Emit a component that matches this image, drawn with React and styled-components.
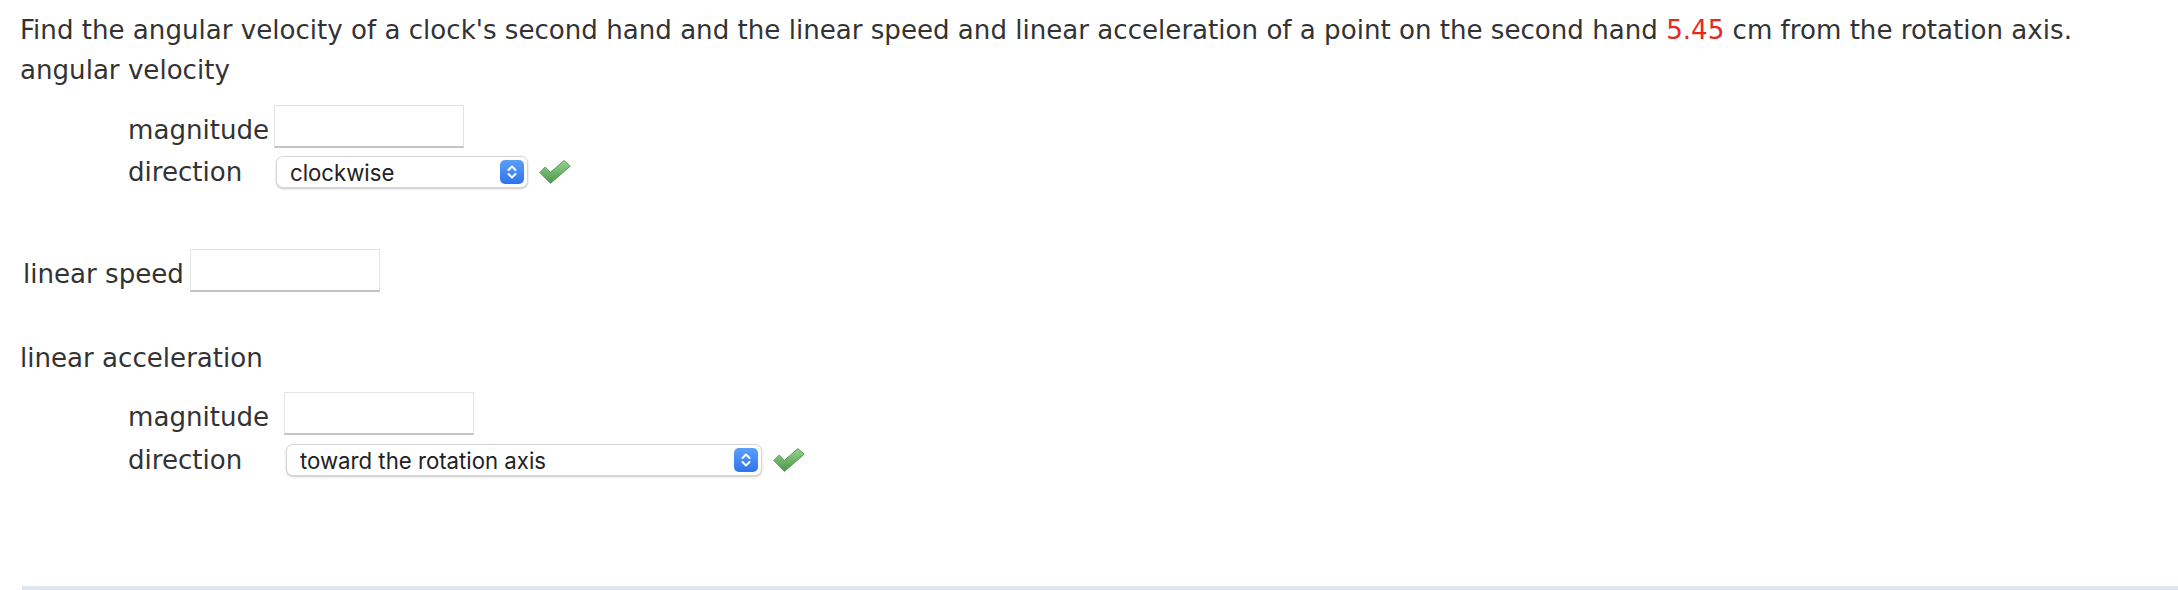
import styled, { createGlobalStyle } from "styled-components";

const GlobalStyle = createGlobalStyle`
  html, body {
    margin: 0;
    padding: 0;
    background: #fff;
  }
  body {
    font-family: "DejaVu Sans", Verdana, sans-serif;
    font-size: 26.1px;
    color: #333;
  }
`;

function Stepper() {
    return (
        <StepperSvg viewBox="0 0 24 24">
            <defs>
                <linearGradient id="stepGrad" x1="0" y1="0" x2="0" y2="1">
                    <stop offset="0" stopColor="#5b9ff9" />
                    <stop offset="1" stopColor="#2f73ee" />
                </linearGradient>
            </defs>
            <rect x="0" y="0" width="24" height="24" rx="5" fill="url(#stepGrad)" />
            <path d="M8.5 10 L12 6.5 L15.5 10" fill="none" stroke="#fff" strokeWidth="2" strokeLinecap="round" strokeLinejoin="round" />
            <path d="M8.5 14 L12 17.5 L15.5 14" fill="none" stroke="#fff" strokeWidth="2" strokeLinecap="round" strokeLinejoin="round" />
        </StepperSvg>
    )
}

function Check() {
    return (
        <CheckSvg viewBox="0 0 32 24">
            <defs>
                <linearGradient id="checkGrad" x1="0" y1="0" x2="0" y2="1">
                    <stop offset="0" stopColor="#96d490" />
                    <stop offset="1" stopColor="#4c964a" />
                </linearGradient>
            </defs>
            <polygon points="0.8,12.5 6.2,7 11.5,12.3 25,0.6 31.2,6.2 11.5,23.4" fill="url(#checkGrad)" stroke="#5a9955" strokeWidth="1" strokeLinejoin="round" />
        </CheckSvg>
    )
}

function Dropdown({value, width}) {
    return (
        <SelectBox $width={width}>
            <SelectText>{value}</SelectText>
            <Stepper />
        </SelectBox>
    )
}

function FieldGroup({top, labelWidth, gap, direction, selectWidth}) {
    return (
        <Group $top={top} $gap={gap}>
            <Row>
                <Label $width={labelWidth} $drop>magnitude</Label>
                <TextInput />
            </Row>
            <Row>
                <Label $width={labelWidth}>direction</Label>
                <Dropdown value={direction} width={selectWidth} />
                <Check />
            </Row>
        </Group>
    )
}

export default function App() {
    return (
        <>
            <GlobalStyle />
            <Page>
                <Prompt>
                    Find the angular velocity of a clock's second hand and the linear speed and linear acceleration of a point on the second hand <Red>5.45</Red> cm from the rotation axis.
                </Prompt>
                <Heading>angular velocity</Heading>
                <FieldGroup top={15} gap={8} labelWidth={146} direction="clockwise" selectWidth={252} />
                <SpeedRow>
                    <Label $drop>linear speed</Label>
                    <TextInput />
                </SpeedRow>
                <Heading $top={46}>linear acceleration</Heading>
                <FieldGroup top={14} gap={9} labelWidth={156} direction="toward the rotation axis" selectWidth={476} />
                <Divider />
            </Page>
        </>
    )
}

const Page = styled.div`
  padding: 10px 0 0 20px;
  height: 590px;
  box-sizing: border-box;
  overflow: hidden;
`;

const Prompt = styled.div`
  line-height: 40px;
  white-space: nowrap;
`;

const Red = styled.span`
  color: #e8281d;
`;

const Heading = styled.div`
  line-height: 40px;
  margin-top: ${p => p.$top || 0}px;
`;

const Group = styled.div`
  display: flex;
  flex-direction: column;
  gap: ${p => p.$gap}px;
  margin-top: ${p => p.$top}px;
  padding-left: 108px;
`;

const Row = styled.div`
  display: flex;
  align-items: center;
`;

const Label = styled.span`
  line-height: 30px;
  padding-top: ${p => p.$drop ? 6 : 0}px;
  ${p => p.$width ? `width: ${p.$width}px;` : ""}
  flex-shrink: 0;
`;

const SpeedRow = styled.div`
  display: flex;
  align-items: center;
  gap: 6px;
  margin-top: 61px;
  padding-left: 3px;
`;

const TextInput = styled.div`
  width: 190px;
  height: 43px;
  box-sizing: border-box;
  background: #fff;
  border: 1px solid #e3e3e3;
  border-bottom: 2px solid #c4c4c4;
`;

const SelectBox = styled.div`
  display: flex;
  align-items: center;
  justify-content: space-between;
  width: ${p => p.$width}px;
  height: 32px;
  box-sizing: border-box;
  margin-left: 2px;
  padding: 0 3px 0 13px;
  background: #fff;
  border: 1px solid #d6d6d6;
  border-radius: 7px;
  box-shadow: 0 1px 2px rgba(0, 0, 0, 0.22);
`;

const SelectText = styled.span`
  font-family: Inter, "Liberation Sans", sans-serif;
  font-size: 22.2px;
  color: #222;
`;

const StepperSvg = styled.svg`
  width: 24px;
  height: 24px;
  flex-shrink: 0;
`;

const CheckSvg = styled.svg`
  width: 32px;
  height: 24px;
  margin-left: 11px;
  flex-shrink: 0;
`;

const Divider = styled.div`
  margin-top: 110px;
  margin-left: 2px;
  height: 8px;
  background: #dde6ee;
`;
